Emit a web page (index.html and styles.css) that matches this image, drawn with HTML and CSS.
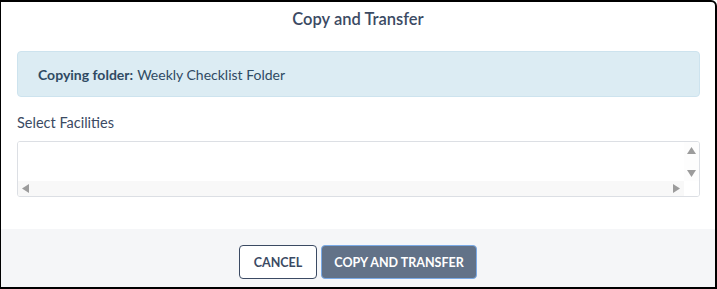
FILE: index.html
```html
<!DOCTYPE html>
<html lang="en">
<head>
<meta charset="utf-8">
<title>Copy and Transfer</title>
<link rel="stylesheet" href="styles.css">
</head>
<body>
<div class="modal">
  <div class="modal-header">
    <h1 class="modal-title">Copy and Transfer</h1>
  </div>
  <div class="modal-body">
    <div class="alert"><strong>Copying folder:</strong> Weekly Checklist Folder</div>
    <label class="field-label">Select Facilities</label>
    <div class="scrollbox">
      <div class="scroll-content"></div>
      <div class="vbar">
        <svg class="arrow" width="9" height="7" viewBox="0 0 9 7"><path d="M4.5 0 L9 7 L0 7 Z" fill="#9c9c9c"/></svg>
        <svg class="arrow" width="9" height="7" viewBox="0 0 9 7"><path d="M0 0 L9 0 L4.5 7 Z" fill="#9c9c9c"/></svg>
      </div>
      <div class="hbar">
        <svg class="arrow" width="7" height="9" viewBox="0 0 7 9"><path d="M7 0 L7 9 L0 4.5 Z" fill="#9c9c9c"/></svg>
        <svg class="arrow" width="7" height="9" viewBox="0 0 7 9"><path d="M0 0 L7 4.5 L0 9 Z" fill="#9c9c9c"/></svg>
      </div>
      <div class="corner"></div>
    </div>
  </div>
  <div class="modal-footer">
    <button class="btn btn-outline">CANCEL</button>
    <button class="btn btn-primary">COPY AND TRANSFER</button>
  </div>
</div>
</body>
</html>
```
FILE: styles.css
```css
* { box-sizing: border-box; }
html, body { margin: 0; padding: 0; }
body {
  font-family: Lato, "Noto Sans", sans-serif;
  color: #3b4a63;
  background: #fff;
}
.modal {
  width: 717px;
  height: 289px;
  border-style: solid;
  border-color: #000;
  border-width: 2px 2px 2px 1px;
  border-top-right-radius: 6px;
  display: flex;
  flex-direction: column;
  overflow: hidden;
}
.modal-header {
  height: 37px;
  display: flex;
  justify-content: center;
  padding-top: 7px;
}
.modal-title {
  margin: 0;
  font-size: 16.5px;
  font-weight: 600;
  line-height: 20px;
  color: #3b4a63;
}
.modal-body {
  flex: 1;
  padding: 12px 15px 0 16px;
  display: flex;
  flex-direction: column;
}
.alert {
  height: 46px;
  background: #dcecf3;
  border: 1px solid #cde3ee;
  border-radius: 4px;
  padding: 0 20px;
  display: flex;
  align-items: center;
  font-size: 14px;
  color: #2f4a63;
  gap: 4px;
}
.alert strong { font-weight: 700; }
.field-label {
  margin-top: 16px;
  font-size: 14.5px;
  line-height: 20px;
  color: #3b4a63;
}
.scrollbox {
  margin-top: 8px;
  height: 56px;
  border: 1px solid #dcdfe4;
  border-radius: 3px;
  display: grid;
  grid-template-columns: 1fr 15px;
  grid-template-rows: 1fr 15px;
  overflow: hidden;
}
.scroll-content { background: #fff; }
.vbar {
  background: #fdfdfd;
  display: flex;
  flex-direction: column;
  align-items: center;
  justify-content: space-between;
  padding: 5px 0 4px;
}
.hbar {
  background: #f8f8f8;
  display: flex;
  align-items: center;
  justify-content: space-between;
  padding: 0 4px 0 4px;
}
.corner { background: #fff; }
.arrow { display: block; }
.modal-footer {
  height: 58px;
  background: #f5f6f8;
  display: flex;
  justify-content: center;
  align-items: flex-start;
  gap: 4px;
  padding-top: 16px;
}
.btn {
  height: 34px;
  border-radius: 4px;
  font-family: Lato, "Noto Sans", sans-serif;
  font-size: 12.5px;
  font-weight: 700;
  padding: 0;
  white-space: nowrap;
  cursor: pointer;
}
.btn-outline {
  width: 78px;
  background: #fff;
  border: 1px solid #3b4a63;
  color: #3b4a63;
}
.btn-primary {
  width: 156px;
  background: #627288;
  border: 1px solid #7aaae6;
  color: #fff;
}
```
